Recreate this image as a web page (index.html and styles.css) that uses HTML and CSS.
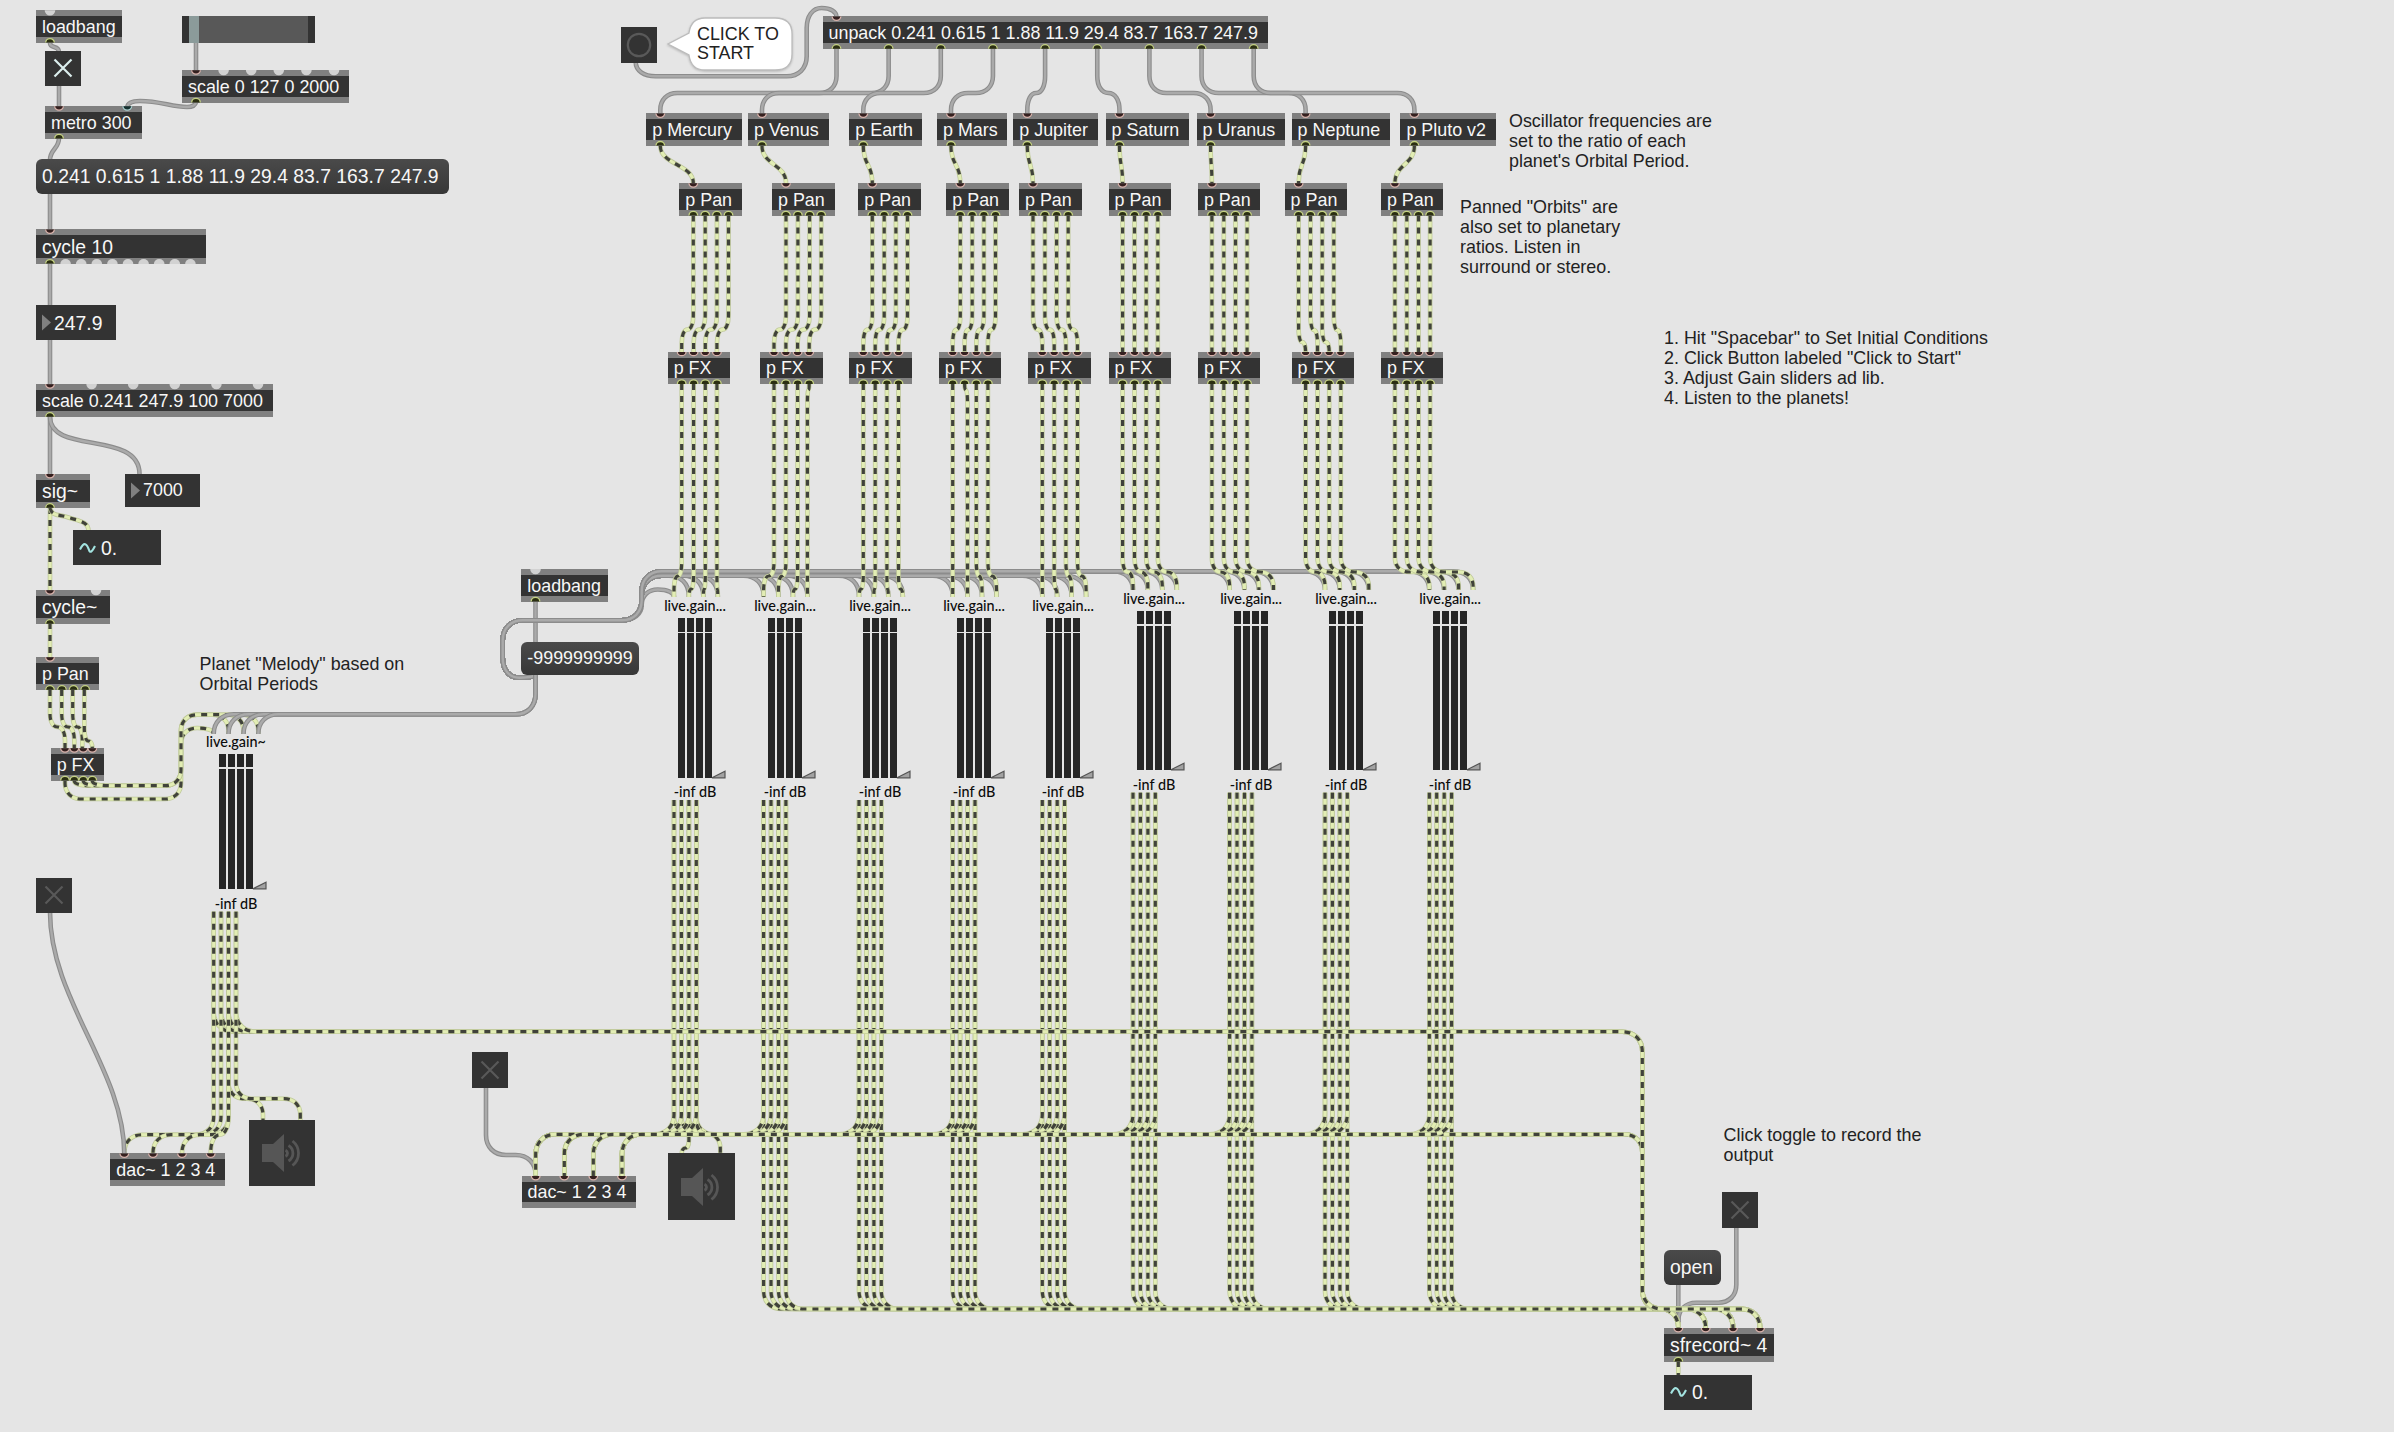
FILE: index.html
```html
<!DOCTYPE html>
<html lang="en">
<head>
<meta charset="utf-8">
<title>Planets patcher</title>
<link rel="stylesheet" href="styles.css">
</head>
<body>
<main class="patcher" id="patcher">
  <svg class="cords" id="cords" width="2394" height="1432" viewBox="0 0 2394 1432"></svg>
  <p class="note note-melody">Planet "Melody" based on<br>Orbital Periods</p>
  <p class="note note-frequencies">Oscillator frequencies are<br>set to the ratio of each<br>planet's Orbital Period.</p>
  <p class="note note-orbits">Panned "Orbits" are<br>also set to planetary<br>ratios. Listen in<br>surround or stereo.</p>
  <p class="note note-steps">1. Hit "Spacebar" to Set Initial Conditions<br>2. Click Button labeled "Click to Start"<br>3. Adjust Gain sliders ad lib.<br>4. Listen to the planets!</p>
  <p class="note note-record">Click toggle to record the<br>output</p>
  <div class="bubble">
    <svg class="bubble-shape" width="132" height="60" viewBox="0 0 132 60"><path d="M40 2H110Q127 2 127 18V38Q127 54 110 54H40Q26 54 24 39L3 28L24 17Q26 2 40 2Z"/></svg>
    <p class="bubble-text">CLICK TO<br>START</p>
  </div>
</main>
<script src="patch.js"></script>
</body>
</html>
```
FILE: styles.css
```css
body {
  margin: 0;
  background: #e5e5e5;
  font-family: "Liberation Sans", Arial, sans-serif;
}

.patcher {
  position: relative;
  width: 2394px;
  height: 1432px;
  overflow: hidden;
  font-size: 17.9px;
}

.cords,
.ports {
  position: absolute;
  left: 0;
  top: 0;
}

.cords path { fill: none; }
.control-edge { stroke: #8c8c8c; stroke-width: 4.6; }
.control-core { stroke: #aaaaaa; stroke-width: 2.4; }
.signal-edge { stroke: #c0ca9a; stroke-width: 4.6; }
.signal-core { stroke: #e2edb4; stroke-width: 3; }
.signal-dash { stroke: #40423a; stroke-width: 3.2; stroke-dasharray: 6 6; }

.port-free { fill: #d2d2d2; }
.port-in { fill: #35201f; stroke: #d9b3ac; stroke-width: 1.3; }
.port-hot { fill: #15302f; stroke: #a9cfcf; stroke-width: 1.3; }
.port-out { fill: #2b2f12; stroke: #c5d283; stroke-width: 1.3; }

.node {
  position: absolute;
  box-sizing: border-box;
  display: flex;
  align-items: center;
  background: #333333;
  color: #f7f7f7;
  white-space: pre;
  line-height: 20px;
}

.large { font-size: 19.35px; }

.object {
  border-top: 6px solid #808080;
  border-bottom: 6px solid #808080;
  padding: 0.6px 0 0 6px;
}

.message {
  border-radius: 6px;
  padding: 0 0 0.8px 6px;
  background: linear-gradient(#4a4a4a, #373737);
}

.number { padding-left: 6px; gap: 3px; }
.signal-number { padding-left: 6px; gap: 5px; }
.toggle,
.button,
.speaker { justify-content: center; }

.slider { background: #333333; padding: 0 7px; }
.slider-knob { width: 10px; height: 100%; background: #8b9b9a; }
.slider-track { flex: 1; height: 100%; background: #585858; }

.gain {
  position: absolute;
  display: flex;
  flex-direction: column;
  align-items: center;
  width: 80px;
  color: #0c0c0c;
  font-family: Lato, sans-serif;
  font-size: 14.4px;
  font-weight: 500;
  line-height: 18px;
  white-space: nowrap;
}

.gain-meter {
  position: relative;
  display: flex;
  gap: 2px;
  margin: 3px 0 5.5px;
}

.gain-bar { width: 7px; height: 100%; background: #262626; }
.gain-line { position: absolute; left: 0; right: 0; top: 13.4px; height: 1.7px; background: #e5e5e5; }
.gain-thumb { position: absolute; left: calc(100% - 1px); bottom: -1px; }

.note {
  position: absolute;
  margin: 0;
  color: #222222;
  font-size: 17.9px;
  line-height: 20px;
  white-space: nowrap;
}

.note-melody { left: 199.6px; top: 654px; }
.note-frequencies { left: 1509px; top: 111px; }
.note-orbits { left: 1460px; top: 197px; }
.note-steps { left: 1664px; top: 328px; }
.note-record { left: 1723.6px; top: 1125px; }

.bubble { position: absolute; left: 665px; top: 16px; }
.bubble-shape { display: block; filter: drop-shadow(0 1px 1px rgba(0, 0, 0, 0.2)); }
.bubble-shape path { fill: #ffffff; stroke: #bcbcbc; stroke-width: 1.3; }
.bubble-text { position: absolute; left: 32px; top: 8.6px; margin: 0; color: #222222; line-height: 19.7px; white-space: nowrap; }
```
FILE: patch.js
```js
const NS = "http://www.w3.org/2000/svg";
const patcher = document.getElementById("patcher");
const cords = document.getElementById("cords");

const ports = document.createElementNS(NS, "svg");
ports.setAttribute("class", "ports");
ports.setAttribute("width", 2394);
ports.setAttribute("height", 1432);

/* ---------- drawing helpers ---------- */

function addPath(parent, className, d) {
  const path = document.createElementNS(NS, "path");
  path.setAttribute("class", className);
  path.setAttribute("d", d);
  parent.appendChild(path);
}

// Polyline with rounded corners.
function route(points, radius = 17) {
  let d = `M${points[0][0]} ${points[0][1]}`;
  for (let i = 1; i < points.length - 1; i++) {
    const [a, b, c] = [points[i - 1], points[i], points[i + 1]];
    const lenIn = Math.hypot(b[0] - a[0], b[1] - a[1]);
    const lenOut = Math.hypot(c[0] - b[0], c[1] - b[1]);
    if (!lenIn || !lenOut) continue;
    const rIn = Math.min(radius, i === 1 ? lenIn : lenIn / 2);
    const rOut = Math.min(radius, i === points.length - 2 ? lenOut : lenOut / 2);
    const p = [b[0] + (a[0] - b[0]) / lenIn * rIn, b[1] + (a[1] - b[1]) / lenIn * rIn];
    const q = [b[0] + (c[0] - b[0]) / lenOut * rOut, b[1] + (c[1] - b[1]) / lenOut * rOut];
    const k = 0.6;
    const c1 = [p[0] + (b[0] - p[0]) * k, p[1] + (b[1] - p[1]) * k];
    const c2 = [q[0] + (b[0] - q[0]) * k, q[1] + (b[1] - q[1]) * k];
    d += `L${p}C${c1} ${c2} ${q}`;
  }
  return d + `L${points[points.length - 1]}`;
}

const step = (x1, y1, x2, y2, mid, radius) =>
  x1 === x2 ? `M${x1} ${y1}V${y2}` : route([[x1, y1], [x1, mid], [x2, mid], [x2, y2]], radius);

const swing = (x1, y1, x2, y2) =>
  `M${x1} ${y1}C${x1} ${y1 + (y2 - y1) * 0.5} ${x2} ${y2 - (y2 - y1) * 0.5} ${x2} ${y2}`;

function control(d) {
  addPath(cords, "control-edge", d);
  addPath(cords, "control-core", d);
}

function signal(d) {
  addPath(cords, "signal-edge", d);
  addPath(cords, "signal-core", d);
  addPath(cords, "signal-dash", d);
}

/* ---------- node helpers ---------- */

function node(kind, x, y, w, h, content = "") {
  const el = document.createElement("div");
  el.className = `node ${kind}`;
  // Boxes set in 13 point type are a little taller than the 12 point ones.
  if (h >= 34 && h < 35) el.classList.add("large");
  el.style.cssText = `left:${x}px;top:${y}px;width:${w}px;height:${h}px`;
  el.innerHTML = content;
  patcher.appendChild(el);
}

const inlet = (x, y, kind = "port-in") => addPath(ports, kind,
  kind === "port-free" ? `M${x - 5.3} ${y}A5.3 5.3 0 0 0 ${x + 5.3} ${y}Z` : `M${x - 4.3} ${y + 0.3}A4.3 3.8 0 0 0 ${x + 4.3} ${y + 0.3}`);
const outlet = (x, y, kind = "port-out") => addPath(ports, kind,
  kind === "port-free" ? `M${x - 5.3} ${y}A5.3 4.8 0 0 1 ${x + 5.3} ${y}Z` : `M${x - 4.3} ${y - 0.3}A4.3 4 0 0 1 ${x + 4.3} ${y - 0.3}`);

// Object box. Each port is [x offset, kind].
function object(text, x, y, w, h, ins = [], outs = []) {
  node("object", x, y, w, h, text);
  ins.forEach(([dx, kind]) => inlet(x + dx, y, kind));
  outs.forEach(([dx, kind]) => outlet(x + dx, y + h, kind));
}

const toggle = (x, y, color) => node("toggle", x, y, 35.6, 35.6,
  `<svg width="20" height="20"><path d="M1.5 1.5L18.5 18.5M18.5 1.5L1.5 18.5" stroke="${color}" stroke-width="2.2" fill="none"/></svg>`);

const speaker = (x, y, size) => node("speaker", x, y, size, size,
  `<svg width="42" height="40" viewBox="0 0 42 40"><g fill="#565656"><path d="M1 11H12L23 1V39L12 29H1Z"/></g><g fill="none" stroke="#565656" stroke-width="2.8"><path d="M24.5 17.2A3.4 3.4 0 0 1 24.5 23.4"/><path d="M27.5 12.5A9 9 0 0 1 27.5 28"/><path d="M31.5 8A15.5 15.5 0 0 1 31.5 32.5"/></g></svg>`);

const number = (text, x, y, w, h) => node("number", x, y, w, h,
  `<svg width="9" height="17"><path d="M0 0.5L9 8.5L0 16.5Z" fill="#808080"/></svg><span>${text}</span>`);

const signalNumber = (x, y) => node("signal-number", x, y, 88, 34.6,
  `<svg width="17" height="12"><path d="M1 7.5Q4 1.5 6.2 2.2T10.4 9Q12 12 16 4" fill="none" stroke="#a3e3e0" stroke-width="2.1"/></svg><span>0.</span>`);

// The centre is kept on a whole pixel so that the four bars stay evenly spaced.
function gain(center, top, height, label) {
  const el = document.createElement("div");
  el.className = "gain";
  el.style.cssText = `left:${Math.round(center) - 40}px;top:${top}px`;
  el.innerHTML = `<span>${label}</span>
    <div class="gain-meter" style="height:${height}px">
      <i class="gain-bar"></i><i class="gain-bar"></i><i class="gain-bar"></i><i class="gain-bar"></i>
      <i class="gain-line"></i>
      <svg class="gain-thumb" width="15" height="9"><path d="M1 7.8L14 1.2V7.8Z" fill="#a2a2a2" stroke="#555" stroke-width="1.2"/></svg>
    </div><span>-inf dB</span>`;
  patcher.appendChild(el);
}

/* ---------- planet columns ---------- */

const QUAD = [14, 25.9, 37.6, 49.2];
const quadPorts = QUAD.map(dx => [dx]);

const planets = [
  { name: "Mercury", x: 646.3, w: 95.7, pan: 679.3, fx: 667.7, gain: 674, bends: [576, 589, 589, 589] },
  { name: "Venus", x: 748, w: 80.5, pan: 772, fx: 760, gain: 763.6, bends: [576, 576, 589, 390] },
  { name: "Earth", x: 849.3, w: 72.7, pan: 858.3, fx: 849.3, gain: 859, bends: [589, 589, 589, 589] },
  { name: "Mars", x: 937, w: 70, pan: 946.3, fx: 938.7, gain: 952.7, bends: [589, 390, 576, 576] },
  { name: "Jupiter", x: 1013.3, w: 85, pan: 1019, fx: 1028.3, gain: 1042.3, bends: [589, 589, 576, 576] },
  { name: "Saturn", x: 1105.5, w: 83.3, pan: 1108.6, fx: 1108.6, gain: 1133, bends: [572, 572, 572, 572] },
  { name: "Uranus", x: 1196.6, w: 88, pan: 1197.9, fx: 1197.9, gain: 1229.6, bends: [572, 572, 572, 572] },
  { name: "Neptune", x: 1291.6, w: 98.4, pan: 1284.6, fx: 1291.6, gain: 1325, bends: [572, 572, 572, 572], fxBends: [342, 330, 342, 330] },
  { name: "Pluto v2", x: 1400.4, w: 95.4, pan: 1380.9, fx: 1380.9, gain: 1429.3, bends: [572, 572, 572, 572] },
];

const gainIn = [0, 14.8, 29.3, 43.8];
const gainOut = [0, 7.4, 14.9, 22.3];
const unpackOut = planets.map((_, i) => 836.5 + i * 52.15);
const recordIn = [1678.3, 1705.7, 1733, 1760];
const dacIn = [535.7, 564.3, 593.3, 622];

/* ---------- control cords ---------- */

control("M50 43C50 49 59 45 59 52");
control("M59 86V107");
control("M196 43V71");
control("M196 102Q195 107 187 107C172 107 160 101 140 101Q128 101 127.3 107");
control(swing(59, 138, 50, 160));
control("M50 193V230");
control("M50 263V306");
control("M50 339V385");
control("M50 417V474");
control("M50 417C50 455 139.5 430 139.5 474");
control(route([[635.7, 62], [635.7, 76.3], [806.7, 76.3], [806.7, 8], [836.5, 8], [836.5, 17]], 20));
planets.forEach((p, i) => control(step(unpackOut[i], 49, p.x + 14, 113.5, 93, 17)));
control("M535.5 602V643");
planets.forEach((p, i) => {
  gainIn.forEach((dx, n) => {
    const bus = i > 4 ? 571.3 : i === 0 && n === 0 ? 589.5 : 575.7;
    control(route([[535.5, 674], [535.5, 677.7], [502.7, 677.7], [502.7, 620.3], [641.7, 620.3],
      [641.7, bus], [p.gain + dx, bus], [p.gain + dx, i > 4 ? 590 : 597]], 20));
  });
});
control(route([[486, 1087], [486, 1155], [535.7, 1155], [535.7, 1176]], 20));
control("M1678.3 1284V1328");
control(route([[1736.3, 1227], [1736.3, 1302.7], [1678.3, 1302.7], [1678.3, 1328]], 18));

/* ---------- signal cords ---------- */

signal("M50 508V590");
signal("M50 508C52 517 60 514 70 518C80 521 88.5 522 88.5 531");
signal("M50 623V657");
[[50, 65, 727], [61.7, 74.3, 727], [72.7, 82.3, 727], [84.3, 92.3, 741]].forEach(([a, b, mid]) =>
  signal(step(a, 690, b, 748, mid, 13)));
[[65, 799, 728, 213.7], [74.3, 785.7, 714.7, 228.5], [83.3, 785.7, 714.7, 243.5], [92.3, 785.7, 714.7, 258.3]].forEach(
  ([x, low, high, end]) => signal(route([[x, 781], [x, low], [181, low], [181, high], [end, high], [end, 734]], 16)));

planets.forEach(p => {
  signal(swing(p.x + 14, 146, p.pan + 14, 183));
  QUAD.forEach((dx, n) => {
    signal(step(p.pan + dx, 215.5, p.fx + dx, 352, p.fxBends ? p.fxBends[n] : 329.5, 14));
    const target = p.gain + gainIn[n];
    signal(step(p.fx + dx, 384, target, p.gain > 1100 ? 590 : 597, p.bends[n], 14));
  });
});

const outTop = p => (p.gain > 1100 ? 792.7 : 800);
planets.slice(1).reverse().forEach(p => gainOut.forEach((dx, n) =>
  signal(step(p.gain + dx, outTop(p), recordIn[n], 1328, 1309, 18))));
gainOut.forEach((dx, n) => signal(route([[674 + dx, 800], [674 + dx, 1134.3], [1642.3, 1134.3],
  [1642.3, 1309], [recordIn[n], 1309], [recordIn[n], 1328]], 18)));
signal(route([[688.9, 800], [688.9, 1148], [681.7, 1148], [681.7, 1154]], 8));
signal(step(696.3, 800, 720.3, 1154, 1134.3, 14));
planets.forEach(p => gainOut.forEach((dx, n) =>
  signal(step(p.gain + dx, outTop(p), dacIn[n], 1176, 1134.3, 20))));

const melodyOut = [213.7, 221, 228.5, 236];
melodyOut.forEach((x, n) => signal(route([[x, 911.7], [x, 1031.7], [1642.3, 1031.7],
  [1642.3, 1309], [recordIn[n], 1309], [recordIn[n], 1328]], 20)));
signal(step(228.5, 911.7, 263, 1120, 1098.7, 16));
signal(step(236, 911.7, 300.3, 1120, 1098.7, 16));
[[213.7, 124.3], [221, 153], [228.5, 182], [228.5, 210.7]].forEach(([a, b]) =>
  signal(step(a, 911.7, b, 1154, 1134.7, 18)));
signal("M1678.3 1361V1376");

/* The melody gain reset and its toggle lie over the signal cords. */
[213.7, 228.5, 243.5, 258.3].forEach(x =>
  control(route([[535.5, 674], [535.5, 714.3], [x, 714.3], [x, 734]], 20)));
control("M50 912C50 1000 124.3 1070 124.3 1154");

/* ---------- boxes ---------- */

object("loadbang", 36, 10.3, 86, 32.6, [[14, "port-free"]], [[14]]);
toggle(45, 50.7, "#dcefee");
node("slider", 182, 16, 132.6, 27, '<i class="slider-knob"></i><i class="slider-track"></i>');
object("scale 0 127 0 2000", 182, 70, 166.7, 32.7,
  [[14], ...[1, 2, 3, 4, 5].map(i => [14 + i * 27.6, "port-free"])], [[14]]);
object("metro 300", 45, 106, 96.7, 32.7, [[14], [82.3, "port-hot"]], [[14]]);
node("message", 36, 159, 412.6, 34.7, "0.241 0.615 1 1.88 11.9 29.4 83.7 163.7 247.9");
object("cycle 10", 36, 229.3, 169.7, 34.6, [[14]],
  [[14], ...[1, 2, 3, 4, 5, 6, 7, 8, 9].map(i => [14 + i * 15.6, "port-free"])]);
number("247.9", 36, 305.3, 80.3, 34.6);
object("scale 0.241 247.9 100 7000", 36, 384, 236.7, 33,
  [[14], ...[1, 2, 3, 4, 5].map(i => [14 + i * 41.6, "port-free"])], [[14]]);
object("sig~", 36, 473.7, 53.5, 34.3, [[14]], [[14]]);
number("7000", 125, 473.7, 75, 33.3);
signalNumber(73, 530.3);
object("cycle~", 36, 590, 74.4, 34, [[14], [60, "port-free"]], [[14]]);
object("p Pan", 36, 657, 62.5, 33, [[14]], quadPorts);
object("p FX", 50.7, 748, 53.7, 32.7, [[14.3], [23.6], [32.6], [41.6]], [[14.3], [23.6], [32.6], [41.6]]);
gain(236, 732.7, 135.7, "live.gain~");
toggle(36, 877.5, "#595959");
object("dac~ 1 2 3 4", 110.3, 1153.3, 114.7, 32.7, [[14], [42.7], [71.7], [100.4]]);
speaker(249, 1120, 65.5);

node("button", 621.3, 27, 35.7, 35.7,
  '<svg width="26" height="26"><circle cx="13" cy="13" r="11.2" fill="none" stroke="#595959" stroke-width="2.2"/></svg>');
object("unpack 0.241 0.615 1 1.88 11.9 29.4 83.7 163.7 247.9", 822.5, 16.3, 445.7, 32.7,
  [[14]], unpackOut.map(x => [x - 822.5]));
planets.forEach(p => {
  object(`p ${p.name}`, p.x, 113.3, p.w, 32.5, [[14]], [[14]]);
  object("p Pan", p.pan, 183, 62.6, 32.7, [[14]], quadPorts);
  object("p FX", p.fx, 351.6, 62.6, 32.6, quadPorts, quadPorts);
  gain(p.gain + 21.1, p.gain > 1100 ? 589.7 : 597.3, 159.4, "live.gain...");
});

object("loadbang", 521.3, 569, 86.7, 32.7, [[14.2, "port-free"]], [[14.2]]);
node("message", 521.3, 642.3, 117.7, 32.7, "-9999999999");
toggle(472, 1052, "#595959");
object("dac~ 1 2 3 4", 521.5, 1175.7, 114.5, 32.5, [[14.2], [42.8], [71.8], [100.5]]);
speaker(667.5, 1153.3, 67);

toggle(1722.3, 1192, "#595959");
node("message", 1664, 1250, 57, 34.5, "open");
object("sfrecord~ 4", 1664, 1327.7, 110.4, 34, recordIn.map(x => [x - 1664]), [[14.3]]);
signalNumber(1664, 1375);

patcher.appendChild(ports);
```
